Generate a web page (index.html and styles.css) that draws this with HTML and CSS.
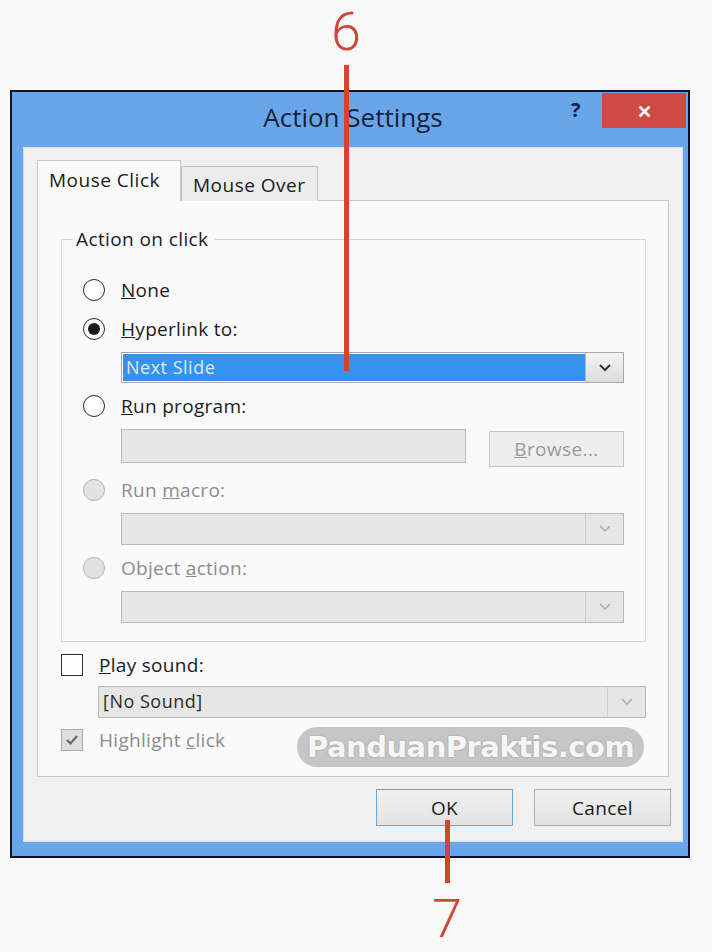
FILE: index.html
```html
<!DOCTYPE html>
<html lang="en">
<head>
<meta charset="UTF-8">
<meta name="viewport" content="width=device-width, initial-scale=1.0">
<title>Action Settings</title>
<link rel="stylesheet" href="styles.css">
</head>
<body>
  <div class="page">
    <div class="window">
      <div class="titlebar">
        <span class="title">Action Settings</span>
        <span class="help">?</span>
        <span class="close">&#x2715;</span>
      </div>

      <div class="panel">
        <div class="tabs">
          <div class="tab active">Mouse Click</div>
          <div class="tab">Mouse Over</div>
        </div>

        <div class="tab-body">
          <fieldset class="group">
            <legend>Action on click</legend>

            <div class="row">
              <span class="radio"></span>
              <span class="label"><u>N</u>one</span>
            </div>
            <div class="row">
              <span class="radio checked"></span>
              <span class="label"><u>H</u>yperlink to:</span>
            </div>
            <div class="select indent">
              <span class="value selected">Next Slide</span>
              <span class="arrow"><svg width="12" height="8" viewBox="0 0 12 8"><path d="M1 1 L6 6 L11 1" fill="none" stroke="#333" stroke-width="2"/></svg></span>
            </div>
            <div class="row">
              <span class="radio"></span>
              <span class="label"><u>R</u>un program:</span>
            </div>
            <div class="file-row indent">
              <span class="textbox"></span>
              <span class="btn disabled"><u>B</u>rowse...</span>
            </div>
            <div class="row disabled">
              <span class="radio"></span>
              <span class="label">Run <u>m</u>acro:</span>
            </div>
            <div class="select indent disabled">
              <span class="value"></span>
              <span class="arrow"><svg width="12" height="8" viewBox="0 0 12 8"><path d="M1 1 L6 6 L11 1" fill="none" stroke="#aaa" stroke-width="1.5"/></svg></span>
            </div>
            <div class="row disabled">
              <span class="radio"></span>
              <span class="label">Object <u>a</u>ction:</span>
            </div>
            <div class="select indent disabled">
              <span class="value"></span>
              <span class="arrow"><svg width="12" height="8" viewBox="0 0 12 8"><path d="M1 1 L6 6 L11 1" fill="none" stroke="#aaa" stroke-width="1.5"/></svg></span>
            </div>
          </fieldset>

          <div class="row check-row">
            <span class="checkbox"></span>
            <span class="label"><u>P</u>lay sound:</span>
          </div>
          <div class="select sound disabled">
            <span class="value">[No Sound]</span>
            <span class="arrow"><svg width="12" height="8" viewBox="0 0 12 8"><path d="M1 1 L6 6 L11 1" fill="none" stroke="#aaa" stroke-width="1.5"/></svg></span>
          </div>
          <div class="row check-row disabled">
            <span class="checkbox checked"><svg width="14" height="12" viewBox="0 0 14 12"><path d="M2 6 L5.5 9.5 L12 2" fill="none" stroke="#666" stroke-width="2.2"/></svg></span>
            <span class="label">Highlight <u>c</u>lick</span>
          </div>
        </div>

        <div class="buttons">
          <span class="btn default">OK</span>
          <span class="btn">Cancel</span>
        </div>
      </div>
    </div>

    <!-- callouts drawn over the screenshot -->
    <div class="callout num-6">6</div>
    <div class="callout-line line-6"></div>
    <div class="callout-line line-7"></div>
    <div class="callout num-7">7</div>
    <div class="watermark">PanduanPraktis.com</div>
  </div>
</body>
</html>
```

FILE: styles.css
```css
body {
  margin: 0;
  background-color: #f8f8f8;
  font-family: "Open Sans", "Noto Sans", sans-serif;
  color: #1b1b1b;
}

.page {
  position: relative;
  width: 712px;
  height: 952px;
  padding: 90px 0 0 10px;
  box-sizing: border-box;
  overflow: hidden;
}

.window {
  width: 680px;
  height: 768px;
  box-sizing: border-box;
  border: 2px solid #0c1433;
  background-color: #68a5e9;
  display: flex;
  flex-direction: column;
}

.titlebar {
  position: relative;
  height: 55px;
  display: flex;
  align-items: center;
  justify-content: center;
}

.title {
  font-size: 26px;
  color: #19223a;
  margin: 0 0 6px 6px;
}

.help {
  position: absolute;
  left: 559px;
  top: 4px;
  font-size: 20px;
  font-weight: bold;
  color: #14204a;
}

.close {
  position: absolute;
  left: 590px;
  top: 1px;
  width: 84px;
  height: 35px;
  background-color: #cf4a45;
  color: #fff;
  font-size: 18px;
  font-weight: bold;
  display: flex;
  align-items: center;
  justify-content: center;
}

.panel {
  margin: 0 5px 14px 11px;
  flex: 1;
  background-color: #f0f0f0;
  border: 1px solid #d3e1f3;
  padding: 12px 13px 0 13px;
}

.tabs {
  display: flex;
  align-items: flex-end;
  height: 41px;
  position: relative;
  z-index: 1;
  margin-bottom: -1px;
}

.tab {
  font-size: 19px;
  letter-spacing: 0.5px;
  padding: 0 11px;
  height: 35px;
  line-height: 36px;
  background-color: #ececec;
  border: 1px solid #c2c2c2;
  border-bottom: none;
  box-sizing: border-box;
}

.tab.active {
  height: 41px;
  line-height: 38px;
  background-color: #fafafa;
  border-color: #c8c8c8;
  padding: 0 20px 0 11px;
}

.tab-body {
  background-color: #fafafa;
  border: 1px solid #c8c8c8;
  height: 577px;
  box-sizing: border-box;
  padding: 26px 22px 0 23px;
  display: flex;
  flex-direction: column;
}

.group {
  margin: 0;
  border: 1px solid #d6d6d6;
  padding: 23px 21px 0 21px;
  height: 415px;
  box-sizing: border-box;
  display: flex;
  flex-direction: column;
  gap: 7px;
}

.group legend {
  font-size: 19px;
  letter-spacing: 0.4px;
  padding: 0 6px 0 3px;
  margin-left: -10px;
  line-height: 24px;
}

.row {
  display: flex;
  align-items: center;
  height: 32px;
  gap: 16px;
  font-size: 19px;
  letter-spacing: 0.3px;
}

.row.disabled {
  color: #8c8c8c;
}

.radio {
  width: 22px;
  height: 22px;
  box-sizing: border-box;
  border: 1.5px solid #2a2a2a;
  border-radius: 50%;
  background-color: #fff;
  display: flex;
  align-items: center;
  justify-content: center;
}

.radio.checked::after {
  content: "";
  width: 12px;
  height: 12px;
  border-radius: 50%;
  background-color: #1b1b1b;
}

.row.disabled .radio {
  background-color: #e2e2e2;
  border-color: #b4b4b4;
}

.indent {
  margin-left: 38px;
}

.select {
  display: flex;
  height: 31px;
  box-sizing: border-box;
  border: 1px solid #a8a8a8;
  background-color: #fff;
  padding: 1px;
}

.select .value {
  flex: 1;
  font-size: 18px;
  line-height: 27px;
  padding-left: 3px;
  letter-spacing: 0.5px;
}

.select .value.selected {
  background-color: #3592ee;
  color: #dcecff;
}

.select .arrow {
  width: 37px;
  display: flex;
  align-items: center;
  justify-content: center;
  background: linear-gradient(#f4f4f4, #dcdcdc);
  border-left: 1px solid #b5b5b5;
  margin: -1px -1px -1px 0;
}

.select.disabled {
  background-color: #e6e6e6;
  border-color: #b9b9b9;
  height: 32px;
}

.select.disabled .arrow {
  background: #e6e6e6;
  border-left-color: #d0d0d0;
}

.file-row {
  display: flex;
  align-items: flex-start;
  justify-content: space-between;
  height: 38px;
}

.textbox {
  width: 345px;
  height: 34px;
  box-sizing: border-box;
  border: 1px solid #b9b9b9;
  background-color: #e6e6e6;
}

.btn {
  display: flex;
  align-items: center;
  justify-content: center;
  box-sizing: border-box;
  border: 1px solid #adadad;
  background: linear-gradient(#f0f0f0, #e3e3e3);
  font-size: 19px;
  letter-spacing: 0.4px;
}

.file-row .btn {
  width: 135px;
  height: 36px;
  margin-top: 2px;
}

.btn.disabled {
  color: #9a9a9a;
  border-color: #c6c6c6;
  background: #eeeeee;
}

.check-row {
  margin-top: 7px;
}

.checkbox {
  width: 22px;
  height: 22px;
  box-sizing: border-box;
  border: 1.5px solid #2f2f2f;
  background-color: #fff;
  display: flex;
  align-items: center;
  justify-content: center;
}

.check-row.disabled .checkbox {
  background-color: #dedede;
  border-color: #aaaaaa;
}

.check-row.disabled {
  margin-top: 6px;
}

.select.sound {
  margin: 5px 0 0 37px;
}

.select.sound .value {
  color: #2a2a2a;
}

.buttons {
  display: flex;
  justify-content: flex-end;
  gap: 21px;
  margin: 12px -2px 0 0;
}

.buttons .btn {
  width: 137px;
  height: 37px;
}

.btn.default {
  border-color: #5ea8e6;
}

/* annotation overlay */
.callout {
  position: absolute;
  font-family: Roboto, "Open Sans", sans-serif;
  font-size: 54px;
  font-weight: 300;
  color: #cf4536;
  line-height: 64px;
}

.num-6 {
  left: 331px;
  top: 0;
}

.num-7 {
  left: 432px;
  top: 887px;
}

.callout-line {
  position: absolute;
  width: 5px;
  background-color: #d8412c;
}

.line-6 {
  left: 344px;
  top: 65px;
  height: 306px;
}

.line-7 {
  left: 445px;
  top: 820px;
  height: 63px;
}

.watermark {
  position: absolute;
  left: 297px;
  top: 727px;
  padding: 0 10px;
  height: 40px;
  border-radius: 20px;
  background-color: rgba(180, 180, 180, 0.75);
  color: #f6f6f6;
  font-family: "DejaVu Sans", sans-serif;
  font-size: 29px;
  font-weight: bold;
  line-height: 40px;
  letter-spacing: -0.5px;
  text-shadow: 0 0 2px #9a9a9a;
}
```
